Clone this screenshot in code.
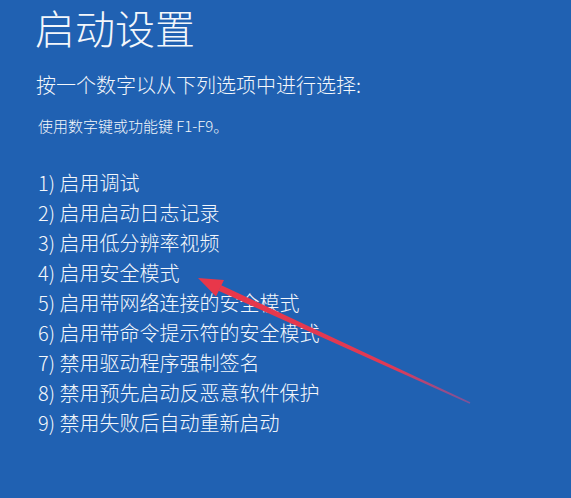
import React from "react";

const options = [
  "1) 启用调试",
  "2) 启用启动日志记录",
  "3) 启用低分辨率视频",
  "4) 启用安全模式",
  "5) 启用带网络连接的安全模式",
  "6) 启用带命令提示符的安全模式",
  "7) 禁用驱动程序强制签名",
  "8) 禁用预先启动反恶意软件保护",
  "9) 禁用失败后自动重新启动",
];

function Arrow() {
  // red hand-drawn annotation arrow pointing at option 4
  return (
    <svg className="absolute inset-0 pointer-events-none" width="571" height="498" viewBox="0 0 571 498">
      <defs>
        <linearGradient id="shaft" x1="220" y1="288" x2="470" y2="403" gradientUnits="userSpaceOnUse">
          <stop offset="0" stopColor="#e8374a" />
          <stop offset="0.7" stopColor="#df3a55" />
          <stop offset="1" stopColor="#b84a8a" stopOpacity="0.6" />
        </linearGradient>
      </defs>
      <polygon points="198,278 224,280 216,296.5" fill="#e8374a" />
      <polygon points="218.5,290.8 221.3,285.2 470.3,402.3 469.7,403.7" fill="url(#shaft)" />
    </svg>
  );
}

export default function App() {
  return (
    <div
      className="relative w-[571px] h-[498px] overflow-hidden bg-[#2061b2] text-[#f4f7fb]"
      style={{ fontFamily: '"Noto Sans CJK SC", "Noto Sans", sans-serif' }}
    >
      <div className="pl-[35px] pt-[1px]">
        <h1 className="text-[40px] leading-[52px] font-light">启动设置</h1>
        <p className="mt-[18px] pl-[1px] text-[20px] leading-[28px] font-light">按一个数字以从下列选项中进行选择:</p>
        <p className="mt-[17px] pl-[3px] text-[15px] leading-[20px] font-light">使用数字键或功能键 F1-F9。</p>
        <ul className="mt-[32px] pl-[3px]">
          {options.map((o) => (
            <li key={o} className="text-[20px] leading-[30px] font-light">{o}</li>
          ))}
        </ul>
      </div>
      <Arrow />
    </div>
  );
}
